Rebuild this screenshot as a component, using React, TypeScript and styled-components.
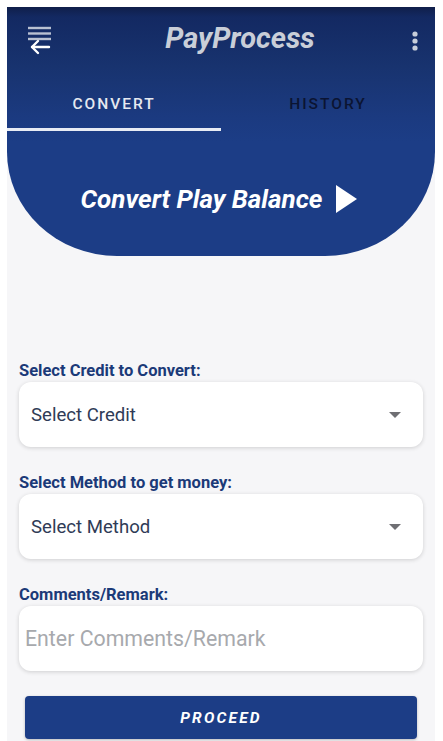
import React from "react";
import styled, { createGlobalStyle } from "styled-components";

const Global = createGlobalStyle`
  html, body { margin: 0; padding: 0; background: #ffffff; }
  body { font-family: Roboto, "Noto Sans", Arial, sans-serif; }
  * { box-sizing: border-box; }
`;

const Frame = styled.div`
  width: 443px;
  height: 741px;
  padding: 7px 8px 0 7px;
  overflow: hidden;
  background: #ffffff;
`;

const Screen = styled.div`
  height: 734px;
  background: #f6f6f8;
  display: flex;
  flex-direction: column;
`;

const Hero = styled.div`
  flex-shrink: 0;
  background: linear-gradient(180deg, #101f4a 0px, #132962 10px, #18336f 60px, #1b3a80 110px, #1c3d86 135px, #1c3d86 100%);
  height: 249px;
  border-bottom-left-radius: 110px 104px;
  border-bottom-right-radius: 110px 104px;
  display: flex;
  flex-direction: column;
`;

const AppBar = styled.div`
  margin-top: 8px;
  height: 53px;
  display: grid;
  grid-template-columns: 70px 1fr 40px;
  align-items: center;
`;

const IconSlot = styled.div<{ $align: "start" | "end" }>`
  display: flex;
  justify-content: ${(p) => (p.$align === "start" ? "flex-start" : "center")};
  padding-left: ${(p) => (p.$align === "start" ? "20px" : "0")};
  align-items: center;
`;

const Title = styled.div`
  text-align: center;
  font-family: Roboto, Arial, sans-serif;
  font-weight: 700;
  font-style: italic;
  font-size: 29px;
  color: #c9ced8;
  padding-left: 8px;
  padding-bottom: 8px;
`;

const Tabs = styled.div`
  display: grid;
  grid-template-columns: 1fr 1fr;
  height: 63px;
`;

const Tab = styled.div<{ $active?: boolean }>`
  display: flex;
  align-items: center;
  justify-content: center;
  font-family: Roboto, Arial, sans-serif;
  font-weight: 500;
  font-size: 15.5px;
  letter-spacing: 2px;
  color: ${(p) => (p.$active ? "#e6e9f0" : "#0b1432")};
  border-bottom: 3px solid ${(p) => (p.$active ? "#e8ecf4" : "transparent")};
  padding-top: 12px;
`;

const Banner = styled.div`
  flex: 1;
  display: flex;
  align-items: center;
  justify-content: center;
  gap: 13px;
  padding-top: 11px;
  padding-right: 4px;
`;

const BannerText = styled.div`
  font-family: Roboto, Arial, sans-serif;
  font-weight: 700;
  font-style: italic;
  font-size: 26px;
  color: #ffffff;
`;

const Form = styled.div`
  display: flex;
  flex-direction: column;
  padding: 105px 12px 0 12px;
`;

const Label = styled.div`
  font-family: Roboto, Arial, sans-serif;
  font-weight: 700;
  font-size: 16.5px;
  color: #1b3a78;
  margin-bottom: 2px;
  line-height: 19px;
`;

const Field = styled.div<{ $last?: boolean }>`
  height: 65px;
  background: #ffffff;
  border-radius: 12px;
  box-shadow: 0 1px 4px rgba(0, 0, 0, 0.16);
  display: flex;
  align-items: center;
  justify-content: space-between;
  padding: 0 22px 0 12px;
  margin-bottom: ${(p) => (p.$last ? "25px" : "26px")};
`;

const FieldText = styled.div<{ $placeholder?: boolean }>`
  font-family: Roboto, Arial, sans-serif;
  font-size: ${(p) => (p.$placeholder ? "21.3px" : "18.6px")};
  color: ${(p) => (p.$placeholder ? "#a7a9ad" : "#2f3b56")};
  margin-left: ${(p) => (p.$placeholder ? "-6px" : "0")};
`;

const Caret = styled.div`
  width: 0;
  height: 0;
  border-left: 6px solid transparent;
  border-right: 6px solid transparent;
  border-top: 6px solid #6f6f73;
`;

const Proceed = styled.button`
  margin: 0 6px;
  height: 43px;
  border: none;
  border-radius: 4px;
  background: #1c3d86;
  color: #ffffff;
  font-family: Roboto, Arial, sans-serif;
  font-weight: 700;
  font-style: italic;
  font-size: 15.5px;
  letter-spacing: 2.2px;
  box-shadow: 0 1px 3px rgba(0, 0, 0, 0.25);
`;

const MenuIcon = () => (
  <svg width="26" height="32" viewBox="0 0 26 32">
    <g stroke="#b9c1d2" strokeWidth="2.4">
      <line x1="1" y1="2" x2="24" y2="2" />
      <line x1="1" y1="7.5" x2="24" y2="7.5" />
      <line x1="1" y1="13" x2="24" y2="13" />
    </g>
    <g stroke="#ffffff" strokeWidth="2.4" fill="none" strokeLinecap="round" strokeLinejoin="round">
      <line x1="5" y1="21" x2="22" y2="21" />
      <polyline points="11,15 5,21 11,27" />
    </g>
  </svg>
);

const DotsIcon = () => (
  <svg width="8" height="22" viewBox="0 0 8 22">
    <circle cx="4" cy="3" r="2.6" fill="#c8ceda" />
    <circle cx="4" cy="10" r="2.6" fill="#c8ceda" />
    <circle cx="4" cy="17" r="2.6" fill="#c8ceda" />
  </svg>
);

const PlayIcon = () => (
  <svg width="22" height="28" viewBox="0 0 22 28">
    <polygon points="1,0 22,14 1,28" fill="#ffffff" />
  </svg>
);

export default function App() {
  return (
    <Frame>
      <Global />
      <Screen>
        <Hero>
          <AppBar>
            <IconSlot $align="start">
              <MenuIcon />
            </IconSlot>
            <Title>PayProcess</Title>
            <IconSlot $align="end">
              <DotsIcon />
            </IconSlot>
          </AppBar>
          <Tabs>
            <Tab $active>CONVERT</Tab>
            <Tab>HISTORY</Tab>
          </Tabs>
          <Banner>
            <BannerText>Convert Play Balance</BannerText>
            <PlayIcon />
          </Banner>
        </Hero>
        <Form>
          <Label>Select Credit to Convert:</Label>
          <Field>
            <FieldText>Select Credit</FieldText>
            <Caret />
          </Field>
          <Label>Select Method to get money:</Label>
          <Field>
            <FieldText>Select Method</FieldText>
            <Caret />
          </Field>
          <Label>Comments/Remark:</Label>
          <Field $last>
            <FieldText $placeholder>Enter Comments/Remark</FieldText>
          </Field>
          <Proceed>PROCEED</Proceed>
        </Form>
      </Screen>
    </Frame>
  );
}
